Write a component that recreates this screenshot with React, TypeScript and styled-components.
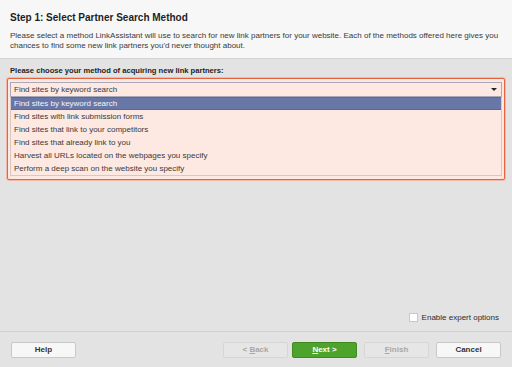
import React from 'react'
import styled, { createGlobalStyle } from 'styled-components'

const Global = createGlobalStyle`
  html, body {
    margin: 0;
    padding: 0;
    background: #e3e3e3;
  }
  body {
    font-family: 'Liberation Sans', Arial, sans-serif;
    color: #2b2b2b;
  }
`

const Page = styled.div`
  width: 512px;
  height: 367px;
  display: flex;
  flex-direction: column;
  background: #e3e3e3;
  overflow: hidden;
`

const Header = styled.div`
  background: #f7f7f7;
  border-bottom: 1px solid #d2d2d2;
  padding: 11px 6px 0 10px;
  height: 47px;
`

const Title = styled.h1`
  margin: 0;
  font-size: 10px;
  font-weight: bold;
  color: #1e1e1e;
  line-height: 13px;
`

const Intro = styled.p`
  margin: 7px 0 0 0;
  font-size: 8px;
  line-height: 10px;
  white-space: nowrap;
  color: #3a3a3a;
`

const Body = styled.div`
  flex: 1;
  display: flex;
  flex-direction: column;
  padding: 7px 7px 0 7px;
`

const Label = styled.div`
  font-size: 7.6px;
  font-weight: bold;
  color: #1e1e1e;
  padding-left: 3px;
  line-height: 10px;
  margin-bottom: 2px;
`

const Highlight = styled.div`
  background: #fde8e2;
  border: 1px solid #e8623f;
  box-shadow: 0 0 0 1px #f6b9a5;
  border-radius: 2px;
  padding: 3px 2px 4px 2px;
  height: 93px;
`

const Combo = styled.div`
  height: 13px;
  border: 1px solid #a9a9b9;
  background: #fde8e2;
  display: flex;
  align-items: center;
  justify-content: space-between;
  padding: 0 4px 0 3px;
  font-size: 8px;
  color: #3a3a3a;
`

const Arrow = styled.span`
  width: 0;
  height: 0;
  border-left: 3px solid transparent;
  border-right: 3px solid transparent;
  border-top: 3px solid #222;
`

const List = styled.div`
  border: 1px solid #d6c9c4;
  border-top: none;
  background: #fde8e2;
  height: 78px;
`

const Option = styled.div<{ $selected?: boolean }>`
  height: 13px;
  line-height: 11px;
  padding-left: 3px;
  font-size: 8px;
  color: ${p => (p.$selected ? '#f4f4fa' : '#3a3a3a')};
  background: ${p => (p.$selected ? '#6877a6' : 'transparent')};
  border: 1px solid ${p => (p.$selected ? '#5a6899' : 'transparent')};
  border-left: none;
  border-right: none;
  box-sizing: border-box;
`

const Spacer = styled.div`
  flex: 1;
`

const ExpertRow = styled.label`
  display: flex;
  justify-content: flex-end;
  align-items: center;
  gap: 4px;
  padding-right: 6px;
  margin-bottom: 9px;
  font-size: 8px;
  color: #2b2b2b;
`

const Box = styled.span`
  width: 7px;
  height: 7px;
  background: #fff;
  border: 1px solid #c8c8c8;
`

const Footer = styled.div`
  border-top: 1px solid #d0d0d0;
  height: 35px;
  display: flex;
  align-items: center;
  padding: 0 11px 0 11px;
`

const Buttons = styled.div`
  margin-left: auto;
  display: flex;
  gap: 7px;
`

const NavPair = styled.div`
  display: flex;
  gap: 4px;
`

const Button = styled.button<{ $kind?: 'primary' | 'disabled' }>`
  width: 65px;
  height: 16px;
  padding: 0;
  border-radius: 2px;
  font-family: 'Liberation Sans', Arial, sans-serif;
  font-size: 8px;
  font-weight: bold;
  border: 1px solid
    ${p => (p.$kind === 'primary' ? '#3f8b22' : p.$kind === 'disabled' ? '#d6d6d6' : '#c9c9c9')};
  background: ${p =>
    p.$kind === 'primary' ? '#4ea32c' : p.$kind === 'disabled' ? '#e6e6e6' : '#f7f7f7'};
  color: ${p =>
    p.$kind === 'primary' ? '#ffffff' : p.$kind === 'disabled' ? '#a8a8a8' : '#333333'};
  u {
    text-decoration: underline;
  }
`

const options = [
  'Find sites by keyword search',
  'Find sites with link submission forms',
  'Find sites that link to your competitors',
  'Find sites that already link to you',
  'Harvest all URLs located on the webpages you specify',
  'Perform a deep scan on the website you specify',
]

export default function App() {
  return (
    <Page>
      <Global />
      <Header>
        <Title>Step 1: Select Partner Search Method</Title>
        <Intro>
          Please select a method LinkAssistant will use to search for new link partners for your website. Each of
          the methods offered here gives you
          <br />
          chances to find some new link partners you&apos;d never thought about.
        </Intro>
      </Header>
      <Body>
        <Label>Please choose your method of acquiring new link partners:</Label>
        <Highlight>
          <Combo>
            <span>{options[0]}</span>
            <Arrow />
          </Combo>
          <List>
            {options.map((o, i) => (
              <Option key={o} $selected={i === 0}>
                {o}
              </Option>
            ))}
          </List>
        </Highlight>
        <Spacer />
        <ExpertRow>
          <Box />
          Enable expert options
        </ExpertRow>
      </Body>
      <Footer>
        <Button>Help</Button>
        <Buttons>
          <NavPair>
            <Button $kind="disabled">
              &lt; <u>B</u>ack
            </Button>
            <Button $kind="primary">
              <u>N</u>ext &gt;
            </Button>
          </NavPair>
          <Button $kind="disabled">
            <u>F</u>inish
          </Button>
          <Button>Cancel</Button>
        </Buttons>
      </Footer>
    </Page>
  )
}
